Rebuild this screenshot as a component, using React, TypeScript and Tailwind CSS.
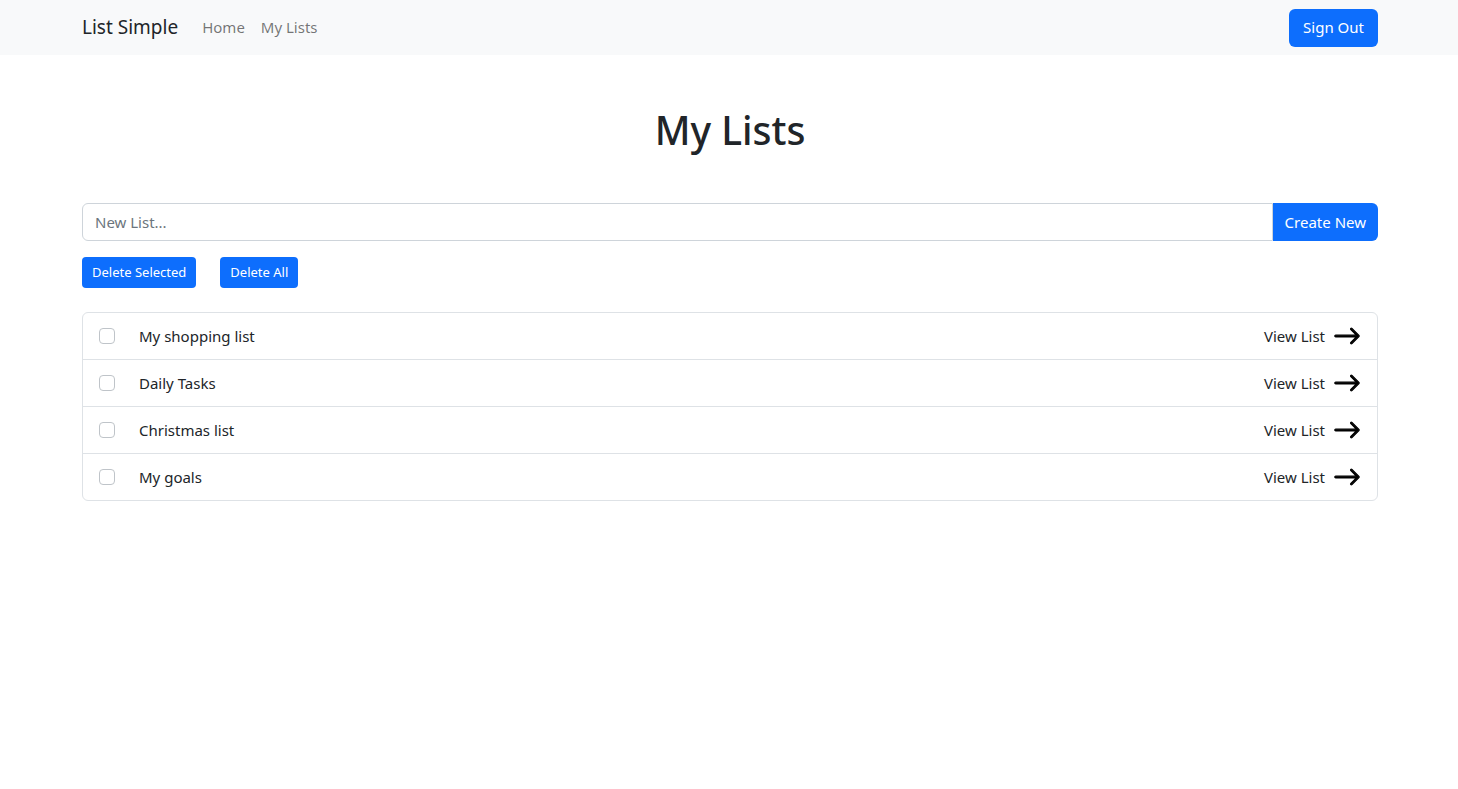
const lists = ['My shopping list', 'Daily Tasks', 'Christmas list', 'My goals'];

function ArrowRight() {
  return (
    <svg width="28" height="28" viewBox="0 0 16 16" fill="currentColor" className="text-black">
      <path
        fillRule="evenodd"
        stroke="currentColor"
        strokeWidth="0.6"
        d="M1 8a.5.5 0 0 1 .5-.5h11.793l-3.147-3.146a.5.5 0 0 1 .708-.708l4 4a.5.5 0 0 1 0 .708l-4 4a.5.5 0 0 1-.708-.708L13.293 8.5H1.5A.5.5 0 0 1 1 8z"
      />
    </svg>
  );
}

export default function App() {
  return (
    <div className="min-h-screen bg-white text-[#212529] font-['Noto_Sans',sans-serif]">
      {/* Navbar */}
      <nav className="bg-[#f8f9fa] h-[55px]">
        <div className="ml-[82px] mr-[80px] h-full flex items-center">
          <span className="text-[19px] text-[#212529] mr-6">List Simple</span>
          <a className="text-[15px] text-[#0000008c] mr-4">Home</a>
          <a className="text-[15px] text-[#0000008c]">My Lists</a>
          <button className="ml-auto bg-[#0d6efd] text-white text-[15px] h-[38px] px-[14px] rounded-md">Sign Out</button>
        </div>
      </nav>

      <main className="ml-[82px] mr-[80px]">
        <h1 className="text-center text-[39px] font-medium leading-[48px] mt-[51px]">My Lists</h1>

        {/* New list input */}
        <div className="flex mt-[49px]">
          <input
            placeholder="New List..."
            className="flex-1 h-[38px] border border-[#ced4da] rounded-l-md px-3 text-[15px] outline-none placeholder:text-[#6c757d]"
          />
          <button className="bg-[#0d6efd] text-white text-[15px] h-[38px] px-3 rounded-r-md">Create New</button>
        </div>

        <div className="flex gap-6 mt-4">
          <button className="bg-[#0d6efd] text-white text-[13px] h-[31px] px-[10px] rounded">Delete Selected</button>
          <button className="bg-[#0d6efd] text-white text-[13px] h-[31px] px-[10px] rounded">Delete All</button>
        </div>

        {/* Lists */}
        <ul className="mt-6 border border-[#dee2e6] rounded-md">
          {lists.map((name, i) => (
            <li
              key={name}
              className={`box-content flex items-center h-[46px] px-4 ${i > 0 ? 'border-t border-[#dee2e6]' : ''}`}
            >
              <span className="w-4 h-4 border border-[#bfc4c9] rounded bg-white" />
              <span className="ml-6 text-[15px]">{name}</span>
              <span className="ml-auto text-[15px] mr-2">View List</span>
              <ArrowRight />
            </li>
          ))}
        </ul>
      </main>
    </div>
  );
}
